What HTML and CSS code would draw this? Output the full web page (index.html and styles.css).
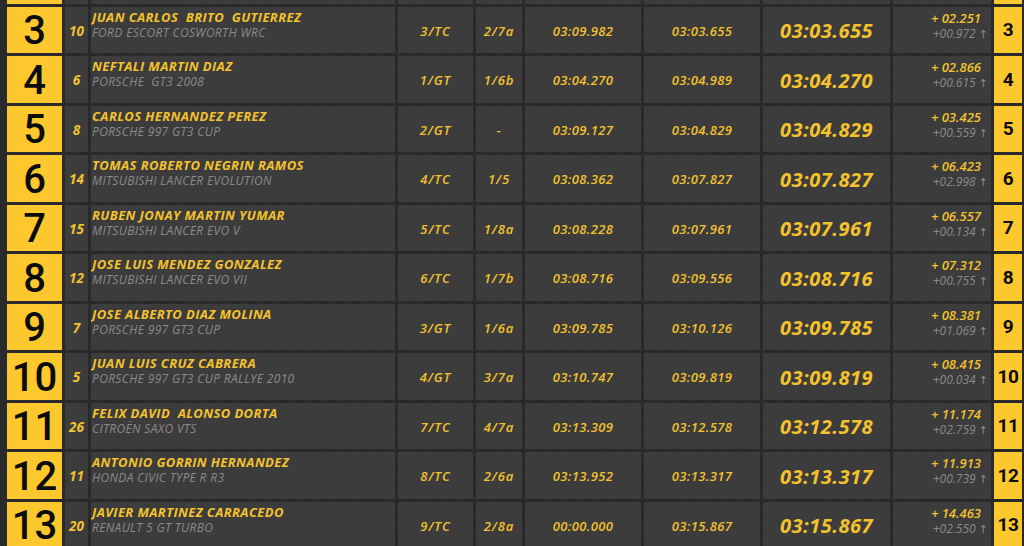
FILE: index.html
```html
<!DOCTYPE html>
<html lang="es">
<head>
<meta charset="utf-8">
<title>Clasificación</title>
<link rel="stylesheet" href="styles.css">
</head>
<body>
<div class="board">
  <div class="row stub">
    <div class="pos"></div><div class="cell"></div><div class="cell"></div><div class="cell"></div><div class="cell"></div><div class="cell"></div><div class="cell"></div><div class="cell"></div><div class="cell"></div><div class="rpos"></div>
  </div>

  <div class="row">
    <div class="pos">3</div><div class="cell num">10</div>
    <div class="cell name"><span class="driver">JUAN CARLOS&nbsp; BRITO&nbsp; GUTIERREZ</span><span class="car">FORD ESCORT COSWORTH WRC</span></div>
    <div class="cell cls">3/TC</div><div class="cell grp">2/7a</div>
    <div class="cell time">03:09.982</div><div class="cell time">03:03.655</div><div class="cell best">03:03.655</div>
    <div class="cell diff"><span class="gap">+ 02.251</span><span class="prev">+00.972 <i class="arr">↑</i></span></div>
    <div class="rpos">3</div>
  </div>

  <div class="row">
    <div class="pos">4</div><div class="cell num">6</div>
    <div class="cell name"><span class="driver">NEFTALI MARTIN DIAZ</span><span class="car">PORSCHE&nbsp; GT3 2008</span></div>
    <div class="cell cls">1/GT</div><div class="cell grp">1/6b</div>
    <div class="cell time">03:04.270</div><div class="cell time">03:04.989</div><div class="cell best">03:04.270</div>
    <div class="cell diff"><span class="gap">+ 02.866</span><span class="prev">+00.615 <i class="arr">↑</i></span></div>
    <div class="rpos">4</div>
  </div>

  <div class="row">
    <div class="pos">5</div><div class="cell num">8</div>
    <div class="cell name"><span class="driver">CARLOS HERNANDEZ PEREZ</span><span class="car">PORSCHE 997 GT3 CUP</span></div>
    <div class="cell cls">2/GT</div><div class="cell grp">-</div>
    <div class="cell time">03:09.127</div><div class="cell time">03:04.829</div><div class="cell best">03:04.829</div>
    <div class="cell diff"><span class="gap">+ 03.425</span><span class="prev">+00.559 <i class="arr">↑</i></span></div>
    <div class="rpos">5</div>
  </div>

  <div class="row">
    <div class="pos">6</div><div class="cell num">14</div>
    <div class="cell name"><span class="driver">TOMAS ROBERTO NEGRIN RAMOS</span><span class="car">MITSUBISHI LANCER EVOLUTION</span></div>
    <div class="cell cls">4/TC</div><div class="cell grp">1/5</div>
    <div class="cell time">03:08.362</div><div class="cell time">03:07.827</div><div class="cell best">03:07.827</div>
    <div class="cell diff"><span class="gap">+ 06.423</span><span class="prev">+02.998 <i class="arr">↑</i></span></div>
    <div class="rpos">6</div>
  </div>

  <div class="row">
    <div class="pos">7</div><div class="cell num">15</div>
    <div class="cell name"><span class="driver">RUBEN JONAY MARTIN YUMAR</span><span class="car">MITSUBISHI LANCER EVO V</span></div>
    <div class="cell cls">5/TC</div><div class="cell grp">1/8a</div>
    <div class="cell time">03:08.228</div><div class="cell time">03:07.961</div><div class="cell best">03:07.961</div>
    <div class="cell diff"><span class="gap">+ 06.557</span><span class="prev">+00.134 <i class="arr">↑</i></span></div>
    <div class="rpos">7</div>
  </div>

  <div class="row">
    <div class="pos">8</div><div class="cell num">12</div>
    <div class="cell name"><span class="driver">JOSE LUIS MENDEZ GONZALEZ</span><span class="car">MITSUBISHI LANCER EVO VII</span></div>
    <div class="cell cls">6/TC</div><div class="cell grp">1/7b</div>
    <div class="cell time">03:08.716</div><div class="cell time">03:09.556</div><div class="cell best">03:08.716</div>
    <div class="cell diff"><span class="gap">+ 07.312</span><span class="prev">+00.755 <i class="arr">↑</i></span></div>
    <div class="rpos">8</div>
  </div>

  <div class="row">
    <div class="pos">9</div><div class="cell num">7</div>
    <div class="cell name"><span class="driver">JOSE ALBERTO DIAZ MOLINA</span><span class="car">PORSCHE 997 GT3 CUP</span></div>
    <div class="cell cls">3/GT</div><div class="cell grp">1/6a</div>
    <div class="cell time">03:09.785</div><div class="cell time">03:10.126</div><div class="cell best">03:09.785</div>
    <div class="cell diff"><span class="gap">+ 08.381</span><span class="prev">+01.069 <i class="arr">↑</i></span></div>
    <div class="rpos">9</div>
  </div>

  <div class="row">
    <div class="pos">10</div><div class="cell num">5</div>
    <div class="cell name"><span class="driver">JUAN LUIS CRUZ CABRERA</span><span class="car">PORSCHE 997 GT3 CUP RALLYE 2010</span></div>
    <div class="cell cls">4/GT</div><div class="cell grp">3/7a</div>
    <div class="cell time">03:10.747</div><div class="cell time">03:09.819</div><div class="cell best">03:09.819</div>
    <div class="cell diff"><span class="gap">+ 08.415</span><span class="prev">+00.034 <i class="arr">↑</i></span></div>
    <div class="rpos">10</div>
  </div>

  <div class="row">
    <div class="pos">11</div><div class="cell num">26</div>
    <div class="cell name"><span class="driver">FELIX DAVID&nbsp; ALONSO DORTA</span><span class="car">CITROËN SAXO VTS</span></div>
    <div class="cell cls">7/TC</div><div class="cell grp">4/7a</div>
    <div class="cell time">03:13.309</div><div class="cell time">03:12.578</div><div class="cell best">03:12.578</div>
    <div class="cell diff"><span class="gap">+ 11.174</span><span class="prev">+02.759 <i class="arr">↑</i></span></div>
    <div class="rpos">11</div>
  </div>

  <div class="row">
    <div class="pos">12</div><div class="cell num">11</div>
    <div class="cell name"><span class="driver">ANTONIO GORRIN HERNANDEZ</span><span class="car">HONDA CIVIC TYPE R R3</span></div>
    <div class="cell cls">8/TC</div><div class="cell grp">2/6a</div>
    <div class="cell time">03:13.952</div><div class="cell time">03:13.317</div><div class="cell best">03:13.317</div>
    <div class="cell diff"><span class="gap">+ 11.913</span><span class="prev">+00.739 <i class="arr">↑</i></span></div>
    <div class="rpos">12</div>
  </div>

  <div class="row">
    <div class="pos">13</div><div class="cell num">20</div>
    <div class="cell name"><span class="driver">JAVIER MARTINEZ CARRACEDO</span><span class="car">RENAULT 5 GT TURBO</span></div>
    <div class="cell cls">9/TC</div><div class="cell grp">2/8a</div>
    <div class="cell time">00:00.000</div><div class="cell time">03:15.867</div><div class="cell best">03:15.867</div>
    <div class="cell diff"><span class="gap">+ 14.463</span><span class="prev">+02.550 <i class="arr">↑</i></span></div>
    <div class="rpos">13</div>
  </div>
</div>
</body>
</html>
```

FILE: styles.css
```css
html, body {
  margin: 0;
  padding: 0;
}
body {
  width: 1024px;
  height: 546px;
  overflow: hidden;
  background-color: #282828;
  background-image: repeating-linear-gradient(45deg, rgba(255,255,255,0.025) 0 1px, transparent 1px 3px);
  font-family: "Open Sans", "Noto Sans", sans-serif;
}
.board {
  display: flex;
  flex-direction: column;
  gap: 3px;
  padding-left: 7px;
}
.row {
  display: grid;
  grid-template-columns: 55px 23px 304px 75px 46px 116px 116px 127px 98px 28px;
  grid-template-rows: 46.5px;
  column-gap: 3px;
  height: 46.5px;
  flex: none;
}
.row.stub {
  height: 3.5px;
  grid-template-rows: 3.5px;
  overflow: hidden;
}
.pos, .rpos {
  background: #fdc72e;
  color: #0c0c0c;
  display: flex;
  align-items: center;
  justify-content: center;
  font-family: "Roboto", "Liberation Sans", sans-serif;
  line-height: 1;
  overflow: hidden;
}
.pos {
  font-size: 40px;
  font-weight: 500;
  padding-top: 3px;
}
.rpos {
  font-size: 19px;
  font-weight: 700;
  letter-spacing: -0.5px;
}
.cell {
  background-color: #3c3c3c;
  color: #f4c22c;
  font-style: italic;
  display: flex;
  align-items: center;
  justify-content: center;
  white-space: nowrap;
  overflow: hidden;
  min-height: 0;
}
.num {
  font-size: 13.5px;
  font-weight: 700;
  padding-top: 2px;
}
.name {
  flex-direction: column;
  align-items: flex-start;
  justify-content: flex-start;
  padding: 2px 0 0 1px;
}
.driver {
  font-size: 13px;
  font-weight: 700;
  line-height: 16px;
  letter-spacing: 0.4px;
}
.car {
  color: #8b8b8b;
  font-size: 12px;
  font-weight: 500;
  line-height: 16px;
  letter-spacing: 0.35px;
}
.cls, .grp {
  font-size: 13px;
  font-weight: 600;
  letter-spacing: 0.9px;
  padding-top: 2px;
}
.time {
  font-size: 13px;
  font-weight: 600;
  letter-spacing: 0.4px;
  padding-top: 2px;
}
.best {
  font-size: 20px;
  font-weight: 700;
  letter-spacing: 0.5px;
  padding-top: 2px;
}
.diff {
  flex-direction: column;
  align-items: flex-end;
  justify-content: flex-start;
  padding: 3px 3px 0 0;
}
.gap {
  font-size: 13px;
  font-weight: 600;
  line-height: 16px;
  padding-right: 7px;
}
.prev {
  color: #8b8b8b;
  font-size: 12px;
  line-height: 16px;
}
.arr {
  font-style: normal;
  font-family: "DejaVu Sans", sans-serif;
  font-size: 11px;
}
```
